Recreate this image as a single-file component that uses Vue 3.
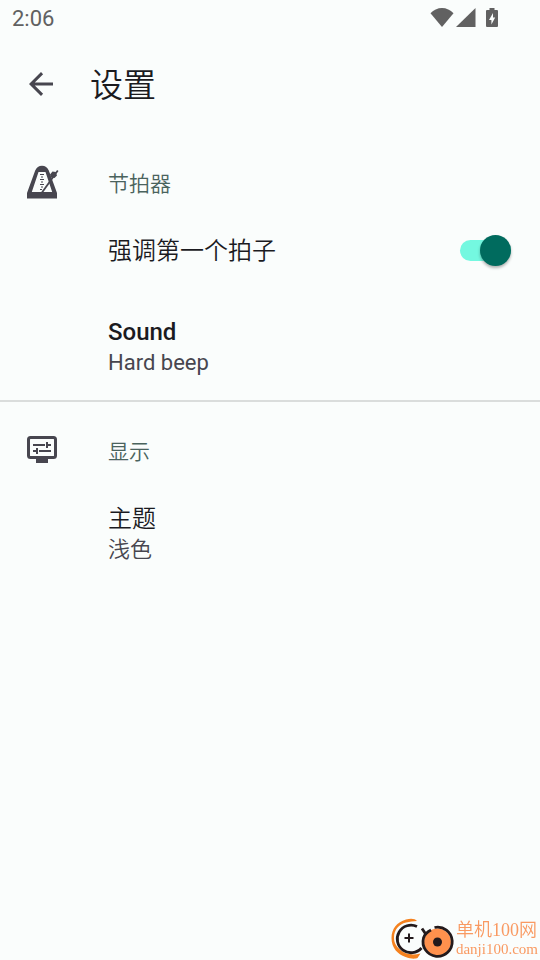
<script setup>
import { ref } from 'vue'

const accent = ref(true)
</script>

<template>
  <div class="screen">
    <div class="status">
      <span class="clock">2:06</span>
      <div class="indicators">
        <svg class="wifi" viewBox="0 0 24 20" aria-hidden="true">
          <path d="M12 19 0.5 5.200C3.600 2 7.600 0 12 0s8.400 2 11.500 5.200z" />
        </svg>
        <svg class="signal" viewBox="0 0 20 20" aria-hidden="true"><path d="M0 19 19.500 0v19z" /></svg>
        <svg class="battery" viewBox="0 0 12 20" aria-hidden="true">
          <path fill-rule="evenodd" d="M3.500 0h5v2H11q1 0 1 1v15q0 1-1 1H1q-1 0-1-1V3q0-1 1-1h2.500zM7 5 3 12h2.400v4.500L9.200 9.600H7z" />
        </svg>
      </div>
    </div>

    <header class="appbar">
      <button class="back" type="button" aria-label="返回">
        <svg viewBox="0 0 24 24" aria-hidden="true">
          <path d="M24 10.500v3H5.800l8.300 8.300L12 24 0 12 12 0l2.100 2.200-8.300 8.300z" />
        </svg>
      </button>
      <h1>设置</h1>
    </header>

    <main>
      <section class="group">
        <div class="heading">
          <svg class="icon" viewBox="0 0 32 34" aria-hidden="true">
            <path fill-rule="evenodd" d="M0 33.500V28L8.200 5.500Q10.200.7 15 .7t6.800 4.800L30 28v5.500zM11.500 7 4.800 27h20.400L18.500 7z" />
            <path class="arm" d="M15 27.500 30.800 5.500" />
            <path class="ticks" d="M13 9.500h4M14 12h2M13 14.500h4M14 17h2M13 19.500h4M14 22h2M13 24.500h2" />
            <path d="m25.500 6.500 3.200.5 1.300 3.500-2.500 2.500-3.500-.5-1-3z" />
          </svg>
          <h2>节拍器</h2>
        </div>
        <label class="row toggle">
          <span class="name">强调第一个拍子</span>
          <input v-model="accent" class="switch" type="checkbox" role="switch" />
        </label>
        <button class="row choice" type="button">
          <span class="name latin">Sound</span>
          <span class="value latin">Hard beep</span>
        </button>
      </section>

      <section class="group">
        <div class="heading">
          <svg class="icon" viewBox="0 0 32 34" aria-hidden="true">
            <rect class="frame" x="1.500" y="4.500" width="27" height="20" rx="2" />
            <path d="M9 25h12v5H9z" />
            <path class="bars" d="M6 12h12M20 12h4M20 9v6M6 18h3M10 15v6M12 18h12" />
          </svg>
          <h2>显示</h2>
        </div>
        <button class="row choice" type="button">
          <span class="name">主题</span>
          <span class="value">浅色</span>
        </button>
      </section>
    </main>

    <aside class="mark">
      <svg viewBox="0 0 66 46" aria-hidden="true">
        <path class="swoosh" d="M29 7C27 4.500 23 4 18 5.500 9 8 3.500 15 3.500 24c0 10 6 16 14 19 5 2 10 2 12 1l3-4.500c-9 2-16 .5-20-3.500C8 32 6 29 6 23.500 6 16 11 10 18 8.500c4-1 7-1 11-1.500z" />
        <path class="ring" d="M29 12.500A13.800 13.800 0 1 0 33.500 34" />
        <path class="plus" d="M21 19.500v9M16.500 24h9" />
        <circle class="disc" cx="49.500" cy="28" r="13.500" />
        <path class="ring" d="M46.500 13.500A14.600 14.600 0 1 1 35.500 24Q37 19 43 16M34 14.500l4 6" />
        <circle class="hub" cx="49.500" cy="28" r="4.500" />
      </svg>
      <div class="words">
        <span class="brand">单机100网</span>
        <span class="domain">danji100.com</span>
      </div>
    </aside>
  </div>
</template>

<style>
body {
  margin: 0;
  background: #fafdfc;
}
</style>

<style scoped>
.screen {
  min-height: 100vh;
  background: #fafdfc;
  color: #1b1b1f;
  font-family: Roboto, "Noto Sans CJK SC", sans-serif;
  font-weight: 350;
}

.status {
  display: flex;
  align-items: center;
  justify-content: space-between;
  height: 36px;
  padding: 0 42px 0 12px;
  color: #616161;
}

.clock {
  padding-top: 2px;
  font-size: 22px;
  line-height: 24px;
  font-weight: 400;
}

.indicators {
  display: flex;
  align-items: center;
  height: 20px;
  fill: currentColor;
}

.indicators svg {
  height: 20px;
}

.wifi {
  width: 24px;
}

.signal {
  width: 20px;
  margin: 0 10px 0 2px;
}

.battery {
  width: 12px;
}

.appbar {
  display: flex;
  align-items: center;
  gap: 25px;
  height: 96px;
  padding: 0 16px;
}

button {
  border: 0;
  padding: 0;
  background: none;
  color: inherit;
  font: inherit;
  text-align: left;
}

.back {
  display: grid;
  place-items: center;
  width: 49px;
  height: 48px;
}

.back svg {
  width: 24px;
  height: 24px;
  fill: #47464f;
}

h1,
h2 {
  margin: 0;
  padding-top: 4px;
  font-weight: inherit;
}

h1 {
  font-size: 33px;
  line-height: 40px;
}

.group {
  padding-top: 24px;
}

.group + .group {
  padding-top: 22px;
  border-top: 2px solid #dadddc;
}

.heading {
  display: flex;
  align-items: center;
  height: 52px;
  padding-left: 27px;
}

.icon {
  width: 32px;
  height: 34px;
  margin-right: 49px;
  fill: #47464f;
}

.arm,
.ticks,
.frame,
.bars {
  fill: none;
  stroke: #47464f;
}

.arm {
  stroke-width: 1.800;
}

.ticks {
  stroke-width: 1;
}

.frame {
  stroke-width: 3;
}

.bars {
  stroke-width: 2;
}

h2 {
  color: #4a635d;
  font-size: 21px;
  line-height: 28px;
}

.row {
  display: flex;
  box-sizing: border-box;
  width: 100%;
  padding: 0 29px 0 108px;
}

.toggle {
  align-items: center;
  justify-content: space-between;
  height: 84px;
}

.toggle .name {
  padding-top: 2px;
}

.choice {
  flex-direction: column;
  justify-content: center;
  height: 108px;
  padding-top: 2px;
}

.group + .group .choice {
  height: 114px;
}

.name {
  font-size: 24px;
  line-height: 32px;
}

.value {
  color: #47464f;
  font-size: 22px;
  line-height: 30px;
}

.name.latin {
  font-weight: 500;
}

.value.latin {
  font-weight: 400;
}

.switch {
  appearance: none;
  display: grid;
  align-items: center;
  width: 51px;
  height: 31px;
  margin: 0;
}

.switch::before,
.switch::after {
  content: "";
  grid-area: 1 / 1;
}

.switch::before {
  height: 21px;
  border-radius: 11px;
  background: #dadddc;
}

.switch::after {
  width: 31px;
  height: 31px;
  border-radius: 50%;
  background: #fff;
  box-shadow: 0 2px 3px rgb(0 0 0 / 30%);
}

.switch:checked::before {
  background: #74f8e0;
}

.switch:checked::after {
  justify-self: end;
  background: #006b5e;
}

.mark {
  position: fixed;
  right: 2px;
  bottom: 0;
  display: flex;
  align-items: center;
  gap: 2px;
  color: #f99a62;
}

.mark svg {
  width: 66px;
  height: 46px;
}

.swoosh {
  fill: #f5821f;
}

.ring,
.plus {
  fill: none;
  stroke: #231a1c;
  stroke-width: 2.800;
}

.plus {
  stroke-width: 2;
}

.disc {
  fill: #ff914d;
}

.hub {
  fill: #231a1c;
}

.words {
  display: flex;
  flex-direction: column;
  padding-top: 4px;
  font-family: "Liberation Serif", "Noto Sans CJK SC", serif;
}

.brand {
  font-size: 18px;
  line-height: 20px;
}

.domain {
  font-size: 15px;
  line-height: 18px;
}
</style>
